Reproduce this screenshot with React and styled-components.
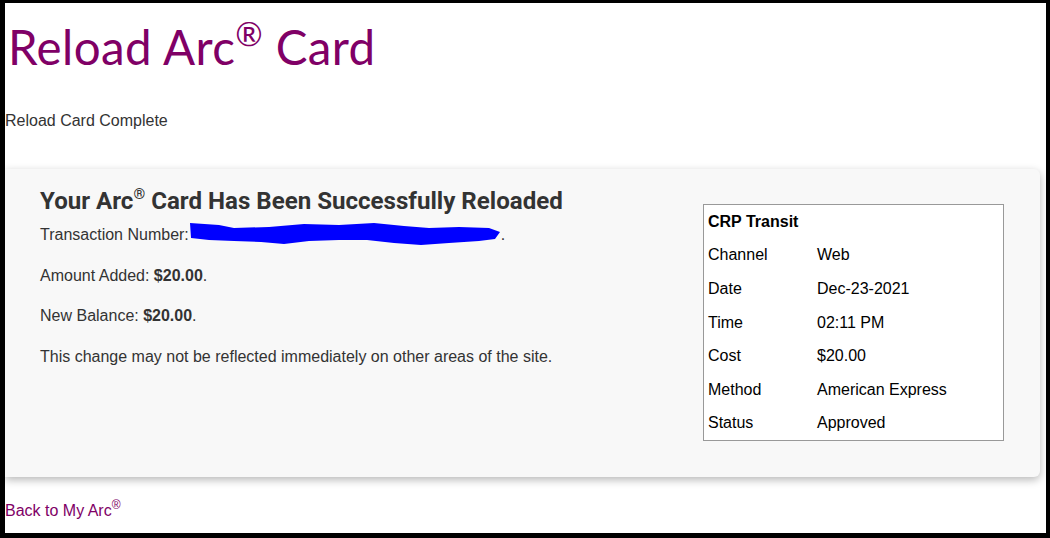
import React from 'react';
import styled, { createGlobalStyle } from 'styled-components';

const GlobalStyle = createGlobalStyle`
  html, body {
    margin: 0;
    padding: 0;
    background: #000;
  }
  body {
    font-family: "Liberation Sans", Arial, sans-serif;
    font-size: 16px;
    color: #333;
  }
`;

const purple = '#800066';

const Frame = styled.div`
  box-sizing: border-box;
  width: 1050px;
  height: 538px;
  border-style: solid;
  border-color: #000;
  border-width: 3px 4px 5px 5px;
  background: #fff;
  overflow: hidden;
`;

const Title = styled.h1`
  margin: 14px 0 0 3px;
  font-family: "Lato", "DejaVu Sans", sans-serif;
  font-weight: 400;
  font-size: 47.5px;
  line-height: 60px;
  color: ${purple};
  letter-spacing: 0.4px;

  sup {
    font-size: 33px;
    line-height: 0;
    vertical-align: 19px;
  }
`;

const Subtitle = styled.p`
  margin: 34px 0 0 0;
  line-height: 20px;
  color: #333;
`;

const Card = styled.div`
  display: flex;
  margin: 38px 6px 0 0;
  padding: 16px 36px 36px 35px;
  height: 308px;
  box-sizing: border-box;
  background: #f8f8f8;
  border-radius: 0 6px 6px 0;
  box-shadow: 0 3px 8px rgba(0, 0, 0, 0.28);
`;

const Summary = styled.div`
  flex: 1;
`;

const Heading = styled.h2`
  margin: 0 0 6px;
  font-family: "Roboto", "Liberation Sans", sans-serif;
  font-weight: 700;
  font-size: 24.1px;
  line-height: 32px;
  color: #333;

  sup {
    font-size: 15px;
    line-height: 0;
    vertical-align: 10px;
  }
`;

const Line = styled.p`
  margin: 0 0 17.5px;
  height: 23px;
  line-height: 23px;
  color: #333;
  display: flex;
  align-items: center;
`;

const Redaction = styled.svg`
  display: block;
  width: 312px;
  height: 28px;
  margin: -2px 0 -3px;
`;

const Receipt = styled.div`
  align-self: flex-start;
  margin-top: 19px;
  width: 301px;
  box-sizing: border-box;
  border: 1px solid #999;
  background: #fff;
  padding: 0 4px;
  color: #000;
`;

const ReceiptRow = styled.div`
  display: grid;
  grid-template-columns: 109px 1fr;
  height: 33.6px;
  align-items: center;
  font-weight: ${p => (p.$head ? 700 : 400)};
`;

const BackLink = styled.a`
  display: inline-block;
  margin-top: 24px;
  color: ${purple};
  text-decoration: none;
  line-height: 20px;

  sup {
    font-size: 12px;
    line-height: 0;
    vertical-align: 7px;
  }
`;

const rows = [
  ['Channel', 'Web'],
  ['Date', 'Dec-23-2021'],
  ['Time', '02:11 PM'],
  ['Cost', '$20.00'],
  ['Method', 'American Express'],
  ['Status', 'Approved']
];

export default function App() {
  return (
    <Frame>
      <GlobalStyle />
      <Title>
        Reload Arc<sup>®</sup> Card
      </Title>
      <Subtitle>Reload Card Complete</Subtitle>

      <Card>
        <Summary>
          <Heading>
            Your Arc<sup>®</sup> Card Has Been Successfully Reloaded
          </Heading>
          <Line>
            Transaction Number:
            <Redaction viewBox="0 0 312 28">
              <path
                d="M1 2 L30 4 L45 7 L80 6 L115 3 L150 4 L185 2 L215 5 L240 7 L270 6 L300 7 L311 11 L306 18 L290 20 L260 22 L232 24 L205 22 L178 19 L150 19 L120 20 L95 23 L72 21 L45 20 L20 19 L2 17 Z"
                fill="#0000ff"
              />
            </Redaction>
            .
          </Line>
          <Line>
            Amount Added:&nbsp;<b>$20.00</b>.
          </Line>
          <Line>
            New Balance:&nbsp;<b>$20.00</b>.
          </Line>
          <Line>This change may not be reflected immediately on other areas of the site.</Line>
        </Summary>

        <Receipt>
          <ReceiptRow $head>CRP Transit</ReceiptRow>
          {rows.map(([label, value]) => (
            <ReceiptRow key={label}>
              <span>{label}</span>
              <span>{value}</span>
            </ReceiptRow>
          ))}
        </Receipt>
      </Card>

      <BackLink href="#">
        Back to My Arc<sup>®</sup>
      </BackLink>
    </Frame>
  );
}
